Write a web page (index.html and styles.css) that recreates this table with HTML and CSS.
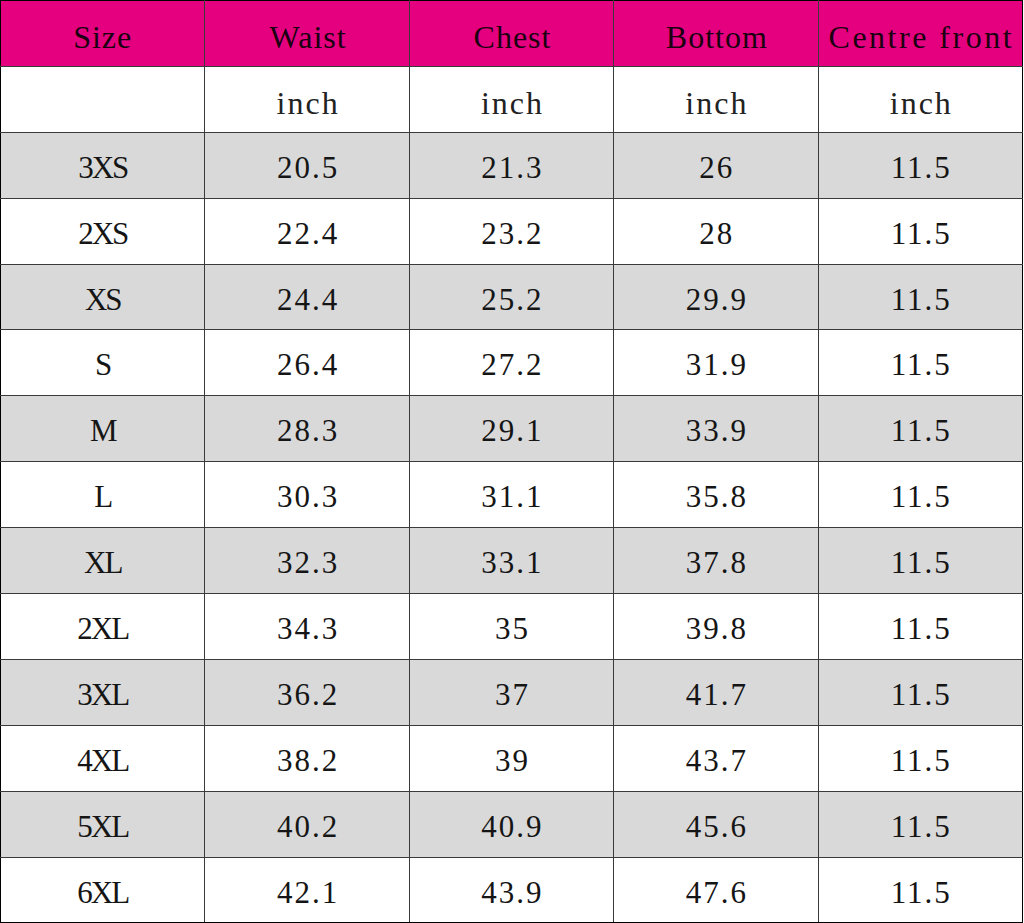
FILE: index.html
```html
<!DOCTYPE html>
<html>
<head>
<meta charset="utf-8">
<link rel="stylesheet" href="styles.css">
</head>
<body>
<table class="size-table">
  <tr class="head"><td>Size</td><td>Waist</td><td>Chest</td><td>Bottom</td><td>Centre front</td></tr>
  <tr class="unit"><td></td><td>inch</td><td>inch</td><td>inch</td><td>inch</td></tr>
  <tr class="alt"><td>3XS</td><td>20.5</td><td>21.3</td><td>26</td><td>11.5</td></tr>
  <tr><td>2XS</td><td>22.4</td><td>23.2</td><td>28</td><td>11.5</td></tr>
  <tr class="alt"><td>XS</td><td>24.4</td><td>25.2</td><td>29.9</td><td>11.5</td></tr>
  <tr><td>S</td><td>26.4</td><td>27.2</td><td>31.9</td><td>11.5</td></tr>
  <tr class="alt"><td>M</td><td>28.3</td><td>29.1</td><td>33.9</td><td>11.5</td></tr>
  <tr><td>L</td><td>30.3</td><td>31.1</td><td>35.8</td><td>11.5</td></tr>
  <tr class="alt"><td>XL</td><td>32.3</td><td>33.1</td><td>37.8</td><td>11.5</td></tr>
  <tr><td>2XL</td><td>34.3</td><td>35</td><td>39.8</td><td>11.5</td></tr>
  <tr class="alt"><td>3XL</td><td>36.2</td><td>37</td><td>41.7</td><td>11.5</td></tr>
  <tr><td>4XL</td><td>38.2</td><td>39</td><td>43.7</td><td>11.5</td></tr>
  <tr class="alt"><td>5XL</td><td>40.2</td><td>40.9</td><td>45.6</td><td>11.5</td></tr>
  <tr><td>6XL</td><td>42.1</td><td>43.9</td><td>47.6</td><td>11.5</td></tr>
</table>
</body>
</html>
```
FILE: styles.css
```css
html, body {
  margin: 0;
  padding: 0;
  background: #ffffff;
}
.size-table {
  border-collapse: collapse;
  width: 1023px;
  height: 923px;
  table-layout: fixed;
  font-family: "Liberation Serif", serif;
  font-size: 31px;
  color: #151515;
}
.size-table td {
  border: 1px solid #3a3a3a;
  text-align: center;
  vertical-align: middle;
  padding: 5px 0 0 2px;
  height: 65.9px;
  box-sizing: border-box;
  white-space: nowrap;
  letter-spacing: 2px;
}
.size-table td:first-child {
  font-size: 31px;
  letter-spacing: -2px;
  padding-left: 0;
}
.size-table tr:first-child td { border-top-color: #000; }
.size-table tr:last-child td { border-bottom-color: #000; }
.size-table td:first-child { border-left-color: #000; }
.size-table td:last-child { border-right-color: #000; }
.head td,
.head td:first-child {
  background: #e4007f;
  color: #1a0010;
  font-size: 32px;
  letter-spacing: 1px;
  padding-top: 9px;
}
.head td:last-child {
  letter-spacing: 2.5px;
}
.unit td {
  font-size: 32px;
  letter-spacing: 2px;
  padding-top: 8px;
  color: #222222;
}
.alt td {
  background: #d9d9d9;
}
```
